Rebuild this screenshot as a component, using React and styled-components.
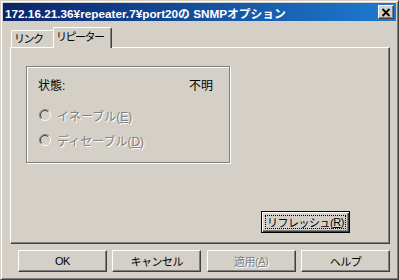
import React from "react";
import styled, { createGlobalStyle } from "styled-components";

const GlobalStyle = createGlobalStyle`
  html, body {
    margin: 0;
    padding: 0;
    background: #d4d0c8;
  }
  * {
    box-sizing: border-box;
  }
`;

const FONT = `"Liberation Sans", "Noto Sans CJK JP", sans-serif`;

const Window = styled.div`
  width: 399px;
  height: 280px;
  display: flex;
  flex-direction: column;
  background: #d4d0c8;
  border: 1px solid;
  border-color: #d4d0c8 #404040 #404040 #d4d0c8;
  box-shadow: inset 1px 1px 0 #fff, inset -1px -1px 0 #808080;
  padding: 2px;
  font-family: ${FONT};
  font-size: 12px;
  color: #000;
`;

const TitleBar = styled.div`
  height: 18px;
  flex: none;
  display: flex;
  align-items: center;
  justify-content: space-between;
  padding: 0 2px 0 2px;
  background: linear-gradient(90deg, #0a246a 0%, #1e7bd0 100%);
`;

const Title = styled.span`
  color: #fff;
  font-weight: bold;
  font-size: 11.75px;
  white-space: nowrap;
`;

const CloseButton = styled.div`
  width: 16px;
  height: 14px;
  display: flex;
  align-items: center;
  justify-content: center;
  background: #d4d0c8;
  border: 1px solid;
  border-color: #fff #404040 #404040 #fff;
  box-shadow: inset -1px -1px 0 #808080;
`;

const Body = styled.div`
  flex: 1;
  display: flex;
  flex-direction: column;
  padding: 6px 6px 0 7px;
`;

const TabStrip = styled.div`
  height: 20px;
  display: flex;
  align-items: flex-end;
  padding-left: 1px;
`;

const Tab = styled.div`
  position: relative;
  width: ${(p) => p.$width}px;
  height: ${(p) => (p.$active ? 21 : 17)}px;
  margin-left: ${(p) => (p.$active ? -2 : 0)}px;
  margin-bottom: ${(p) => (p.$active ? -1 : 0)}px;
  z-index: ${(p) => (p.$active ? 2 : 0)};
  background: #d4d0c8;
  border: 1px solid;
  border-bottom: none;
  border-color: #fff #404040 #404040 #fff;
  border-radius: 2px 2px 0 0;
  box-shadow: inset -1px 0 0 #808080;
  font-size: 11px;
  letter-spacing: -1.5px;
  line-height: 13px;
  padding: ${(p) => (p.$active ? "3px 0 0 2px" : "2px 0 0 2px")};
  white-space: nowrap;
`;

const Panel = styled.div`
  position: relative;
  z-index: 1;
  height: 197px;
  flex: none;
  display: flex;
  flex-direction: column;
  border: 1px solid;
  border-color: #fff #404040 #404040 #fff;
  box-shadow: inset -1px -1px 0 #808080;
  padding: 18px 0 0 15px;
`;

const GroupBox = styled.div`
  width: 204px;
  height: 97px;
  border: 1px solid #808080;
  box-shadow: inset 1px 1px 0 #fff, 1px 1px 0 #fff;
  padding: 12px 0 0 11px;
  display: flex;
  flex-direction: column;
`;

const StatusRow = styled.div`
  display: grid;
  grid-template-columns: 151px auto;
  height: 14px;
  line-height: 14px;
`;

const RadioList = styled.div`
  display: flex;
  flex-direction: column;
  gap: 11px;
  margin-top: 15px;
`;

const RadioRow = styled.div`
  display: flex;
  align-items: center;
  height: 14px;
  gap: 6px;
  padding-left: 1px;
`;

const DisabledText = styled.span`
  color: #808080;
  text-shadow: 1px 1px 0 #fff;
  font-size: 12px;
  white-space: nowrap;
`;

const Spacer = styled.div`
  flex: 1;
`;

const Button = styled.div`
  width: 89px;
  height: 22px;
  display: flex;
  align-items: center;
  justify-content: center;
  background: #d4d0c8;
  border: 1px solid;
  border-color: ${(p) => (p.$default ? "#000" : "#fff #404040 #404040 #fff")};
  box-shadow: ${(p) =>
    p.$default
      ? "inset 1px 1px 0 #fff, inset -1px -1px 0 #404040, inset -2px -2px 0 #808080"
      : "inset -1px -1px 0 #808080"};
  padding: ${(p) => (p.$default ? "3px" : "0")};
  font-size: 11px;
  letter-spacing: -0.5px;
  white-space: nowrap;
  color: ${(p) => (p.$disabled ? "#808080" : "#000")};
  text-shadow: ${(p) => (p.$disabled ? "1px 1px 0 #fff" : "none")};
`;

const FocusRing = styled.span`
  flex: 1;
  align-self: stretch;
  display: flex;
  align-items: center;
  justify-content: center;
  border: 1px dotted #000;
`;

const RefreshButton = styled(Button)`
  align-self: flex-end;
  margin: 0 39px 10px 0;
`;

const ButtonRow = styled.div`
  display: flex;
  justify-content: space-between;
  margin-top: 6px;
  padding-left: 8px;
  height: 22px;
`;

function RadioCircle() {
  return (
    <svg width="12" height="12" viewBox="0 0 12 12">
      <circle cx="6" cy="6" r="5" fill="#d4d0c8" />
      <path d="M2.1 9.9 A5.5 5.5 0 0 1 9.9 2.1" stroke="#808080" fill="none" />
      <path d="M9.9 2.1 A5.5 5.5 0 0 1 2.1 9.9" stroke="#fff" fill="none" />
      <path d="M2.8 9.2 A4.5 4.5 0 0 1 9.2 2.8" stroke="#404040" fill="none" />
      <path d="M9.2 2.8 A4.5 4.5 0 0 1 2.8 9.2" stroke="#d4d0c8" fill="none" />
    </svg>
  );
}

function CloseGlyph() {
  return (
    <svg width="10" height="9" viewBox="0 0 10 9">
      <path d="M1.5 1 L8.5 8 M8.5 1 L1.5 8" stroke="#000" strokeWidth="1.8" />
    </svg>
  );
}

export default function App() {
  return (
    <>
      <GlobalStyle />
      <Window>
        <TitleBar>
          <Title>172.16.21.36¥repeater.7¥port20の SNMPオプション</Title>
          <CloseButton>
            <CloseGlyph />
          </CloseButton>
        </TitleBar>
        <Body>
          <TabStrip>
            <Tab $width={44}>リンク</Tab>
            <Tab $width={59} $active>
              リピーター
            </Tab>
          </TabStrip>
          <Panel>
            <GroupBox>
              <StatusRow>
                <span>状態:</span>
                <span>不明</span>
              </StatusRow>
              <RadioList>
                <RadioRow>
                  <RadioCircle />
                  <DisabledText>
                    イネーブル(<u>E</u>)
                  </DisabledText>
                </RadioRow>
                <RadioRow>
                  <RadioCircle />
                  <DisabledText>
                    ディセーブル(<u>D</u>)
                  </DisabledText>
                </RadioRow>
              </RadioList>
            </GroupBox>
            <Spacer />
            <RefreshButton $default>
              <FocusRing>
                リフレッシュ(<u>R</u>)
              </FocusRing>
            </RefreshButton>
          </Panel>
          <ButtonRow>
            <Button>OK</Button>
            <Button>キャンセル</Button>
            <Button $disabled>
              適用(<u>A</u>)
            </Button>
            <Button>ヘルプ</Button>
          </ButtonRow>
        </Body>
      </Window>
    </>
  );
}
